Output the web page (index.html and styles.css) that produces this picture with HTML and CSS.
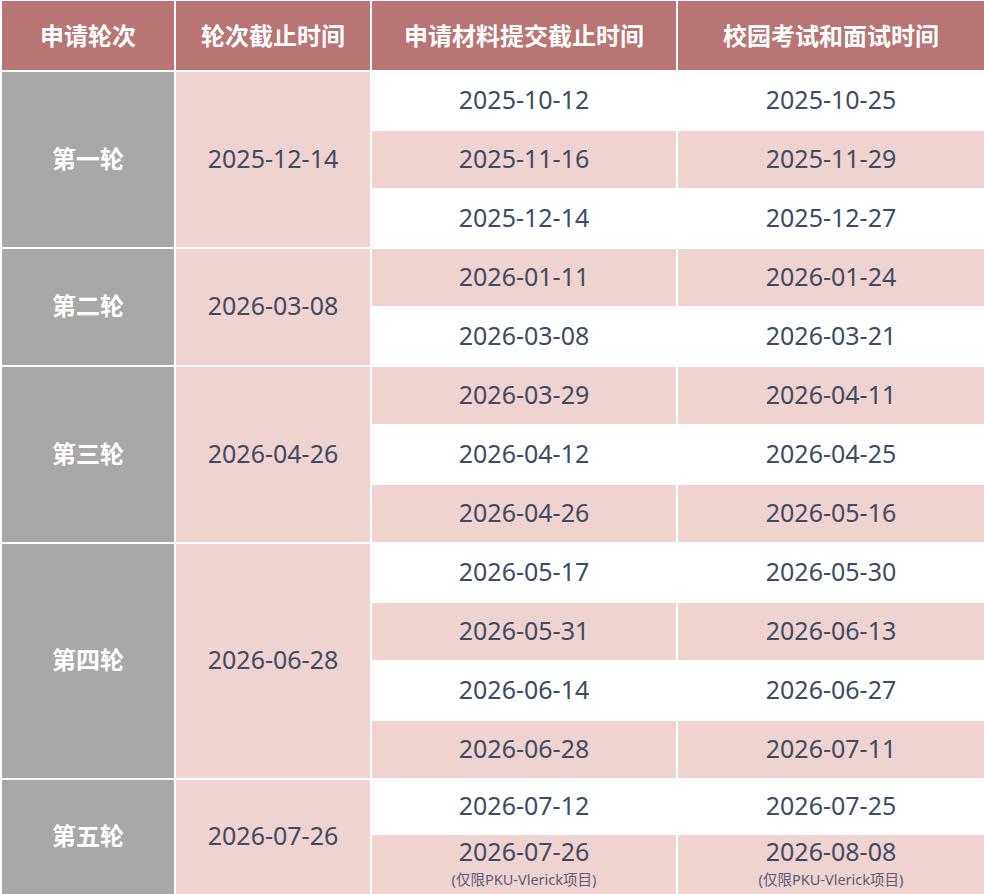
FILE: index.html
```html
<!DOCTYPE html>
<html lang="zh-CN">
<head>
<meta charset="utf-8">
<title>申请轮次</title>
<link rel="stylesheet" href="styles.css">
</head>
<body>
<table class="schedule">
  <colgroup>
    <col class="c1"><col class="c2"><col class="c3"><col class="c4">
  </colgroup>
  <thead>
    <tr class="head">
      <th>申请轮次</th>
      <th>轮次截止时间</th>
      <th>申请材料提交截止时间</th>
      <th>校园考试和面试时间</th>
    </tr>
  </thead>
  <tbody>
    <tr class="row odd">
      <td class="round" rowspan="3">第一轮</td>
      <td class="deadline" rowspan="3">2025-12-14</td>
      <td>2025-10-12</td><td>2025-10-25</td>
    </tr>
    <tr class="row even"><td>2025-11-16</td><td>2025-11-29</td></tr>
    <tr class="row odd"><td>2025-12-14</td><td>2025-12-27</td></tr>

    <tr class="row even">
      <td class="round" rowspan="2">第二轮</td>
      <td class="deadline" rowspan="2">2026-03-08</td>
      <td>2026-01-11</td><td>2026-01-24</td>
    </tr>
    <tr class="row odd"><td>2026-03-08</td><td>2026-03-21</td></tr>

    <tr class="row even">
      <td class="round" rowspan="3">第三轮</td>
      <td class="deadline" rowspan="3">2026-04-26</td>
      <td>2026-03-29</td><td>2026-04-11</td>
    </tr>
    <tr class="row odd"><td>2026-04-12</td><td>2026-04-25</td></tr>
    <tr class="row even"><td>2026-04-26</td><td>2026-05-16</td></tr>

    <tr class="row odd">
      <td class="round" rowspan="4">第四轮</td>
      <td class="deadline" rowspan="4">2026-06-28</td>
      <td>2026-05-17</td><td>2026-05-30</td>
    </tr>
    <tr class="row even"><td>2026-05-31</td><td>2026-06-13</td></tr>
    <tr class="row odd"><td>2026-06-14</td><td>2026-06-27</td></tr>
    <tr class="row even"><td>2026-06-28</td><td>2026-07-11</td></tr>

    <tr class="row odd short">
      <td class="round" rowspan="2">第五轮</td>
      <td class="deadline" rowspan="2">2026-07-26</td>
      <td>2026-07-12</td><td>2026-07-25</td>
    </tr>
    <tr class="row even last">
      <td class="noted"><div class="date">2026-07-26</div><div class="note">(仅限PKU-Vlerick项目)</div></td>
      <td class="noted"><div class="date">2026-08-08</div><div class="note">(仅限PKU-Vlerick项目)</div></td>
    </tr>
  </tbody>
</table>
</body>
</html>
```

FILE: styles.css
```css
html, body {
  margin: 0;
  padding: 0;
  background: #ffffff;
  overflow: hidden;
}

.schedule {
  border-collapse: separate;
  border-spacing: 2px;
  table-layout: fixed;
  width: 986px;
  margin-top: -1px;
  font-family: "Noto Sans", "Noto Sans CJK SC", sans-serif;
}

.c1 { width: 172px; }
.c2 { width: 194px; }
.c3 { width: 304px; }
.c4 { width: 306px; }

.schedule th,
.schedule td {
  padding: 0;
  text-align: center;
  vertical-align: middle;
}

.head { height: 69px; }

.head th {
  padding-bottom: 2px;
  background: #b87574;
  color: #ffffff;
  font-family: "Noto Sans CJK SC", sans-serif;
  font-weight: 700;
  font-size: 24px;
  line-height: 32px;
}

.row { height: 57px; }
.row.short { height: 53px; }
.row.last { height: 59px; }

.row td {
  padding-bottom: 4px;
  font-size: 25px;
  line-height: 30px;
  color: #3e4c63;
}

.odd td { background: #ffffff; }
.even td { background: #f0d2d0; }

.row td.round {
  background: #a8a8a8;
  color: #ffffff;
  font-family: "Noto Sans CJK SC", sans-serif;
  font-weight: 700;
  font-size: 24px;
  line-height: 32px;
}

.row td.deadline {
  background: #f0d2d0;
}

.row td.noted {
  vertical-align: top;
  padding-top: 1px;
  padding-bottom: 0;
}

.date {
  line-height: 30px;
}

.note {
  line-height: 26px;
  font-size: 14.5px;
  color: #55607a;
}
```
